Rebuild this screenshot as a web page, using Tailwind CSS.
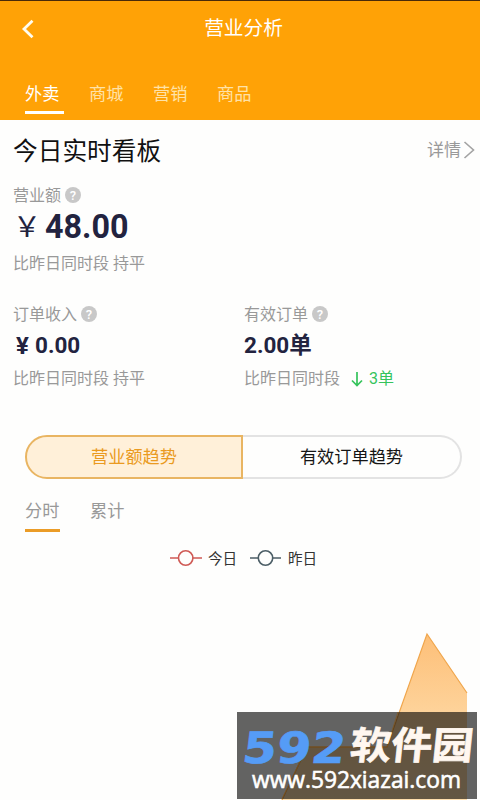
<!DOCTYPE html>
<html lang="zh-CN">
<head>
<meta charset="utf-8">
<title>营业分析</title>
<script src="https://cdn.jsdelivr.net/npm/@tailwindcss/browser@4"></script>
</head>
<body class="bg-[#fefefd]">
<div class="relative flex h-[800px] w-[480px] flex-col overflow-hidden bg-[#fefefd] font-['Roboto','Noto_Sans_CJK_SC',sans-serif] text-[16px] text-[#999]">
  <header class="flex h-[120px] shrink-0 flex-col border-t border-[#4a2a08] bg-[#ffa206] text-white">
    <div class="grid h-[54px] grid-cols-[60px_1fr_53px] items-center">
      <svg class="-mt-px ml-[21px] h-[20px] w-[14px]" viewBox="0 0 14 20" fill="none" stroke="#fffdf0" stroke-width="2.8"><path d="M11.5 1.8 3 10l8.5 8.2"/></svg>
      <h1 class="text-center text-[19.7px] leading-[56px]">营业分析</h1>
    </div>
    <nav class="mt-[26px] flex pl-[25px] text-[17.2px] leading-[26px] text-[#ffe2a8]">
      <div class="w-[64px] text-white">外卖<div class="mt-[4px] h-[2.5px] w-[39px] bg-white"></div></div>
      <div class="w-[64px]">商城</div>
      <div class="w-[64px]">营销</div>
      <div>商品</div>
    </nav>
  </header>

  <section class="flex h-[60px] shrink-0 items-center justify-between pl-[13px] pr-[5px]">
    <h2 class="pt-[3px] text-[24.7px] leading-[60px] text-[#111]">今日实时看板</h2>
    <div class="flex items-center gap-[2px] text-[17px]"><span class="pt-[2px]">详情</span>
      <svg class="h-[18px] w-[12px]" viewBox="0 0 12 18" fill="none" stroke="#a3a3a3" stroke-width="1.6"><path d="M1.5 1 10.5 9l-9 8"/></svg>
    </div>
  </section>

  <section class="flex h-[114px] shrink-0 flex-col pl-[13px]">
    <div class="flex h-[30px] items-center gap-[4px]"><span class="pt-[2px]">营业额</span>
      <span class="flex size-[16px] items-center justify-center rounded-full bg-[#c8c8c8] text-[13px] font-medium leading-none text-white">?</span>
    </div>
    <div class="flex h-[33px] items-center text-[32.3px] font-bold leading-[33px] text-[#22233f]"><span class="-mt-[2px] w-[32px] font-['Noto_Sans_CJK_SC',sans-serif] text-[28px] font-normal">￥</span><span class="pt-[2px]">48.00</span></div>
    <div class="h-[38px] leading-[41px]">比昨日同时段 持平</div>
  </section>

  <section class="grid h-[141px] shrink-0 grid-cols-[231px_1fr] pl-[13px] pt-[5px]">
    <div>
      <div class="flex h-[30px] items-center gap-[4px]"><span class="pt-[2px]">订单收入</span>
        <span class="flex size-[16px] items-center justify-center rounded-full bg-[#c8c8c8] text-[13px] font-medium leading-none text-white">?</span>
      </div>
      <div class="flex h-[34px] items-center pl-[3px] text-[22.5px] font-bold text-[#22233f]"><span class="w-[19px] text-[24px]">¥</span>0.00</div>
      <div class="leading-[32px]">比昨日同时段 持平</div>
    </div>
    <div>
      <div class="flex h-[30px] items-center gap-[4px]"><span class="pt-[2px]">有效订单</span>
        <span class="flex size-[16px] items-center justify-center rounded-full bg-[#c8c8c8] text-[13px] font-medium leading-none text-white">?</span>
      </div>
      <div class="flex h-[34px] items-center text-[22.5px] font-bold text-[#22233f]">2.00单</div>
      <div class="flex items-center leading-[32px]">比昨日同时段
        <svg class="ml-[11px] h-[15px] w-[12px]" viewBox="0 0 12 15" fill="none" stroke="#35c45c" stroke-width="1.7"><path d="M6 0v13.5M1 8.5l5 5 5-5"/></svg>
        <span class="ml-[6px] text-[#35c45c]">3单</span>
      </div>
    </div>
  </section>

  <div class="ml-[25px] flex h-[44px] w-[437px] shrink-0 text-center text-[17.2px] leading-[41px]">
    <div class="w-[218px] rounded-l-[22px] border-2 border-[#e9b562] bg-[#fff0d9] text-[#ea9a20]">营业额趋势</div>
    <div class="w-[219px] rounded-r-[22px] border-2 border-l-0 border-[#e3e3e3] text-[#151515]">有效订单趋势</div>
  </div>

  <div class="flex h-[53px] shrink-0 pl-[25px] pt-[17px] text-[17.2px] leading-[30px]">
    <div class="w-[65px]">分时<div class="mt-[3px] h-[3px] w-[35px] bg-[#eb9c27]"></div></div>
    <div>累计</div>
  </div>

  <div class="flex h-[52px] shrink-0 items-center pl-[170px] text-[14.6px] text-[#333]">
    <svg class="h-[18px] w-[32px]" viewBox="0 0 32 18" fill="none" stroke="#cf5a55" stroke-width="1.6"><path d="M0 9h8.5M23 9h9"/><circle cx="15.7" cy="9" r="7.2"/></svg>
    <span class="ml-[6px] w-[42px] pt-[3px]">今日</span>
    <svg class="h-[18px] w-[32px]" viewBox="0 0 32 18" fill="none" stroke="#4c5e66" stroke-width="1.6"><path d="M0 9h8.5M23 9h8"/><circle cx="15.5" cy="9" r="7.2"/></svg>
    <span class="ml-[6px] pt-[3px]">昨日</span>
  </div>

  <svg class="h-[216px] w-[480px] shrink-0" viewBox="0 584 480 216">
    <defs><linearGradient id="area" x1="0" y1="634" x2="0" y2="800" gradientUnits="userSpaceOnUse"><stop offset="0" stop-color="#fdbf78"/><stop offset=".5" stop-color="#fed49c"/><stop offset="1" stop-color="#ffdfae"/></linearGradient></defs>
    <path d="M282 800 307 747H387L427 634 467 693V800Z" fill="url(#area)"/>
    <path d="M282 800 307 747H387L427 634 467 693" fill="none" stroke="#f0a64c" stroke-width="1.2"/>
  </svg>

  <svg class="absolute left-[237px] top-[712px] h-[87px] w-[240px]" viewBox="0 0 240 87">
    <rect width="240" height="87" fill="#000" fill-opacity=".61"/>
    <path d="M45 87 70 35H150L161 0" fill="none" stroke="#80571f" stroke-width=".8"/>
    <g transform="translate(4 51) skewX(-7)">
      <text x="0" y="0" textLength="103" lengthAdjust="spacingAndGlyphs" fill="#559cf6" stroke="#559cf6" stroke-width=".6" font-family="'DejaVu Sans', sans-serif" font-weight="700" font-size="43">592</text>
    </g>
    <g transform="translate(112 47) skewX(-6)">
      <text x="0" y="0" textLength="123" lengthAdjust="spacingAndGlyphs" fill="#fff7f0" stroke="#fff7f0" stroke-width=".7" font-family="'Noto Sans CJK SC', sans-serif" font-weight="700" font-size="38">软件园</text>
    </g>
    <text x="15" y="76" textLength="209" lengthAdjust="spacingAndGlyphs" fill="#fff" stroke="#fff" stroke-width=".6" font-family="'Open Sans', 'Noto Sans', sans-serif" font-weight="400" font-size="23">www.592xiazai.com</text>
  </svg>
</div>
</body>
</html>
